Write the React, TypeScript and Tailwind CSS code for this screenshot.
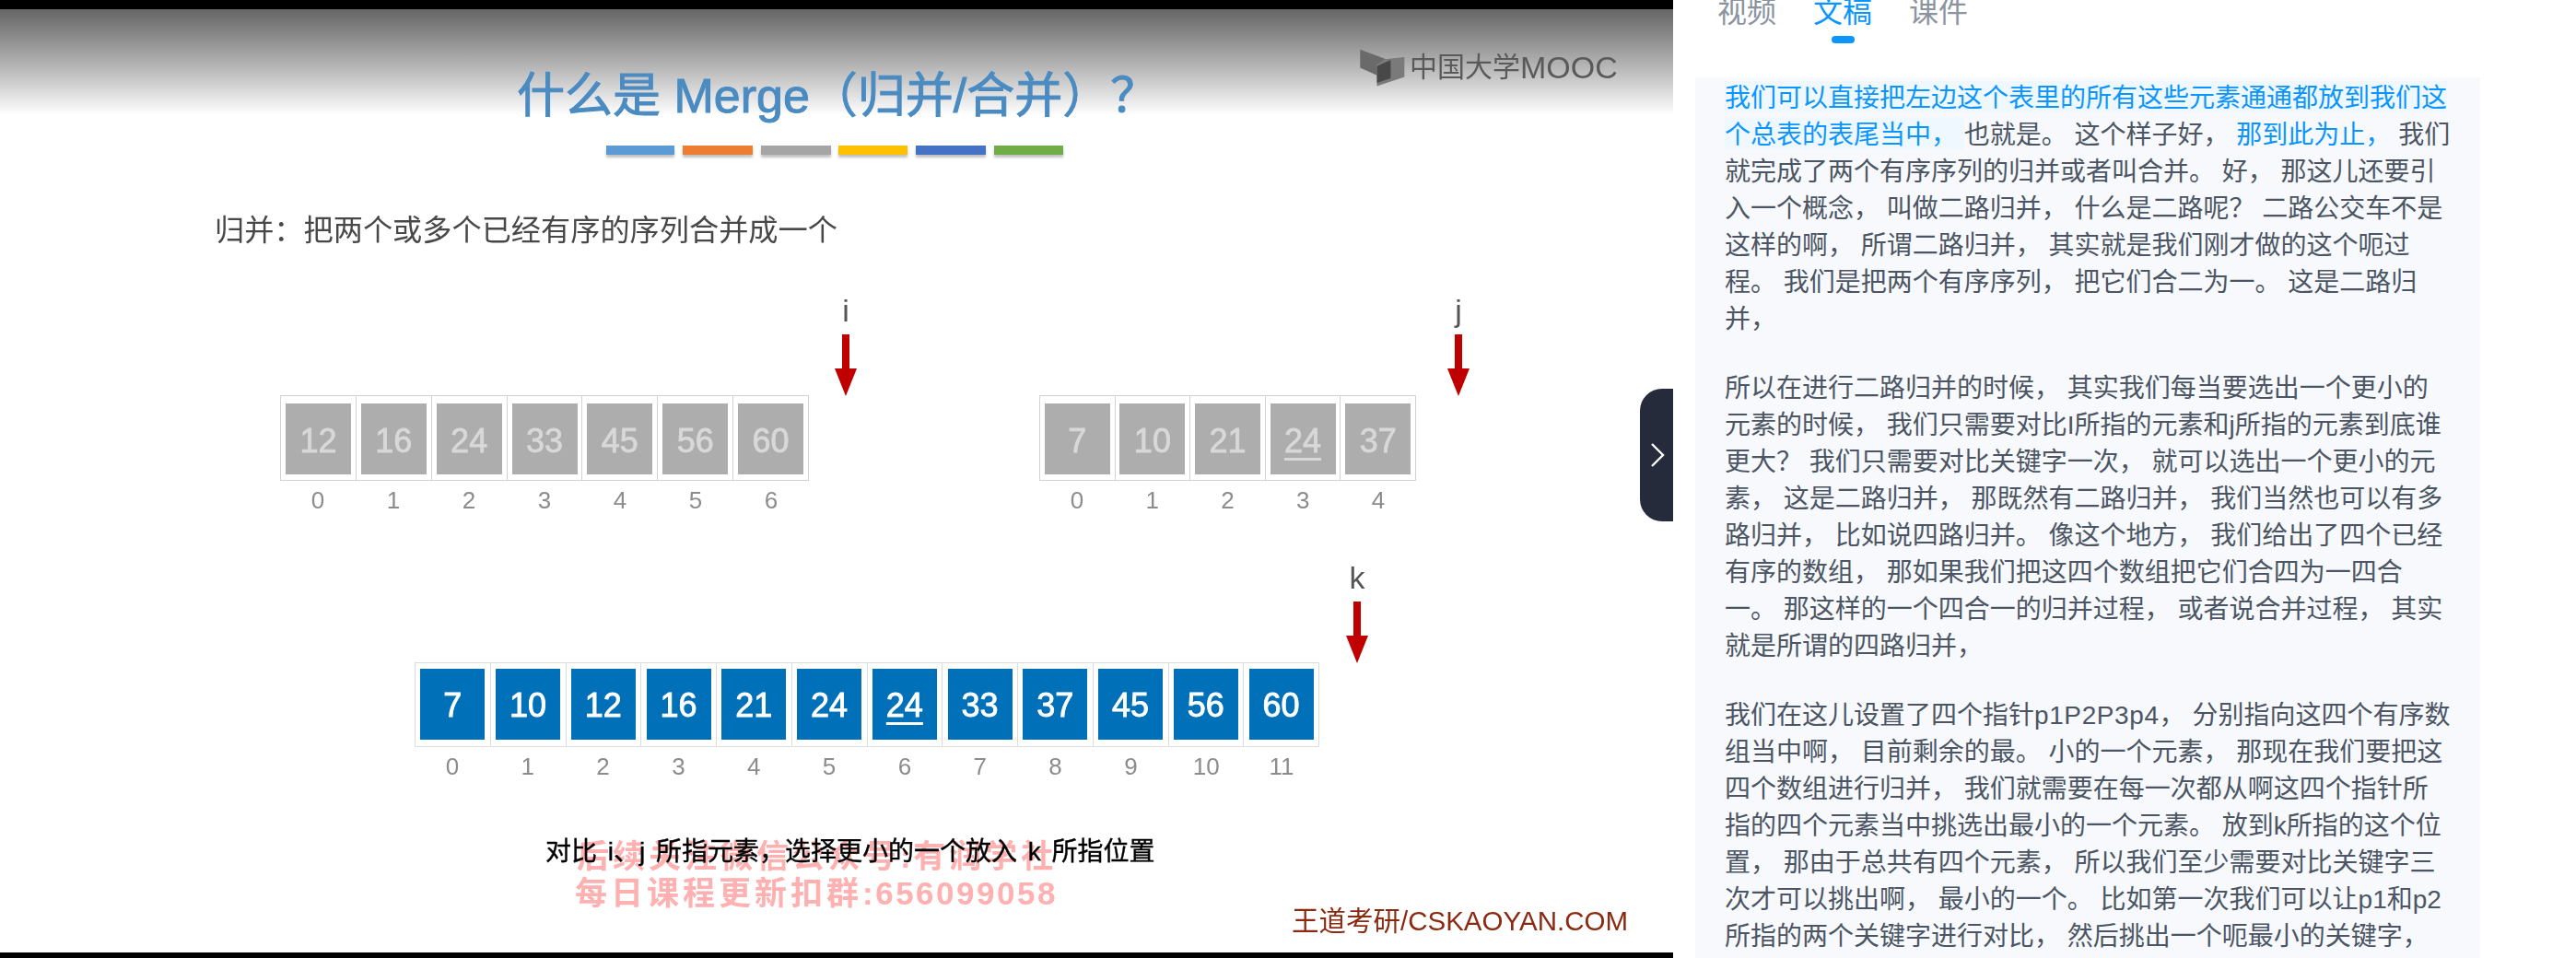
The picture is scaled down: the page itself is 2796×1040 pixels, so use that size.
const A1 = ["12", "16", "24", "33", "45", "56", "60"];
const A2 = ["7", "10", "21", "24", "37"];
const A3 = ["7", "10", "12", "16", "21", "24", "24", "33", "37", "45", "56", "60"];

function Arrow() {
  return (
    <svg width="24" height="67" viewBox="0 0 24 67" className="block">
      <polygon points="8,0 16,0 16,37 24,37 12,67 0,37 8,37" fill="#c00000" />
    </svg>
  );
}

function Pointer({ name, className }: { name: string; className: string }) {
  return (
    <div className={"absolute flex w-[40px] flex-col items-center " + className}>
      <div className="h-[46px] text-[34px] leading-[40px] text-[#555]">{name}</div>
      <Arrow />
    </div>
  );
}

function GreyArray({ items, under, className }: { items: string[]; under: number; className: string }) {
  return (
    <div className={"absolute " + className}>
      <div className="flex h-[93px] border border-[#d2d2d2]">
        {items.map((n, i) => (
          <div key={i} className="flex flex-1 justify-center border-r border-[#d2d2d2] pt-[8px] pb-[6px] last:border-r-0">
            <div className="flex w-[71px] items-center justify-center bg-[#adadad] pt-[5px] text-[36px] text-[#d8d8d8] [-webkit-text-stroke:0.8px_#d8d8d8]">
              <span className={i === under ? "underline decoration-[3px] underline-offset-[6px]" : ""}>{n}</span>
            </div>
          </div>
        ))}
      </div>
      <div className="flex pt-[6px]">
        {items.map((_, i) => (
          <div key={i} className="flex-1 text-center text-[26px] leading-[30px] text-[#8c8c8c]">{i}</div>
        ))}
      </div>
    </div>
  );
}

function BlueArray() {
  return (
    <div className="absolute top-[719px] left-[450px] w-[982px]">
      <div className="flex h-[92px] border border-[#dcdcdc]">
        {A3.map((n, i) => (
          <div key={i} className="flex flex-1 justify-center border-r border-[#dcdcdc] pt-[6px] pb-[7px] last:border-r-0">
            <div className="flex w-[70px] items-center justify-center bg-[#0070b8] pt-[3px] text-[36px] text-white [-webkit-text-stroke:0.9px_white]">
              <span className={i === 6 ? "underline decoration-[3px] underline-offset-[6px]" : ""}>{n}</span>
            </div>
          </div>
        ))}
      </div>
      <div className="flex pt-[6px]">
        {A3.map((_, i) => (
          <div key={i} className="flex-1 text-center text-[26px] leading-[30px] text-[#8c8c8c]">{i}</div>
        ))}
      </div>
    </div>
  );
}

function Video() {
  return (
    <div className="relative h-[1040px] w-[1816px] shrink-0 overflow-hidden bg-white">
      <div className="absolute inset-x-0 top-[10px] h-[115px] bg-gradient-to-b from-[#666666] to-white" />
      <div className="absolute inset-0 blur-[0.6px]">
        <div className="absolute top-[68px] left-[561px] text-[52px] leading-[72px] whitespace-nowrap text-[#4a8bc2] [-webkit-text-stroke:1px_#4a8bc2]">
          什么是 Merge（归并/合并）？
        </div>
        <div className="absolute top-[158px] left-[658px] flex gap-[8.8px]">
          <div className="h-[10px] w-[74px] bg-[#5b9bd5] shadow-[0_3px_3px_rgba(0,0,0,0.25)]" />
          <div className="h-[10px] w-[76px] bg-[#ed7d31] shadow-[0_3px_3px_rgba(0,0,0,0.25)]" />
          <div className="h-[10px] w-[76px] bg-[#a5a5a5] shadow-[0_3px_3px_rgba(0,0,0,0.25)]" />
          <div className="h-[10px] w-[75px] bg-[#ffc000] shadow-[0_3px_3px_rgba(0,0,0,0.25)]" />
          <div className="h-[10px] w-[76px] bg-[#4472c4] shadow-[0_3px_3px_rgba(0,0,0,0.25)]" />
          <div className="h-[10px] w-[75px] bg-[#70ad47] shadow-[0_3px_3px_rgba(0,0,0,0.25)]" />
        </div>
        <div className="absolute top-[227px] left-[233px] text-[32.2px] leading-[46px] whitespace-nowrap text-[#484848]">
          归并：把两个或多个已经有序的序列合并成一个
        </div>

        <svg width="53" height="47" viewBox="40 30 160 140" className="absolute top-[50px] left-[1473px]">
          <polygon points="50,40 135,72 105,90 105,125 50,100" fill="#6a6a6a" />
          <polygon points="130,72 195,65 195,130 105,160 105,90" fill="#7a7a7a" />
          <polygon points="150,75 150,135 105,150 105,95" fill="#484848" />
        </svg>
        <div className="absolute top-[52px] left-[1530px] flex items-center leading-[42px] whitespace-nowrap text-[#5a5a5a]">
          <span className="text-[30px]">中国大学</span>
          <span className="text-[34px]">MOOC</span>
        </div>

        <GreyArray items={A1} under={-1} className="top-[429px] left-[304px] w-[574px]" />
        <GreyArray items={A2} under={3} className="top-[429px] left-[1128px] w-[409px]" />
        <Pointer name="i" className="top-[317px] left-[898px]" />
        <Pointer name="j" className="top-[317px] left-[1563px]" />
        <BlueArray />
        <Pointer name="k" className="top-[607px] left-[1453px]" />

        <div className="absolute top-[907px] left-[626px] text-[35px] leading-[46px] font-bold tracking-[4px] whitespace-nowrap text-[#ffb0b0]">
          后续关注微信公众号<span className="tracking-[2.5px]">:</span>有润学社
        </div>
        <div className="absolute top-[947px] left-[624px] text-[35px] leading-[46px] font-bold tracking-[4px] whitespace-nowrap text-[#ffb0b0]">
          每日课程更新扣群<span className="tracking-[2.5px]">:656099058</span>
        </div>
        <div className="absolute top-[906px] left-[592px] text-[28px] leading-[38px] whitespace-nowrap text-black [word-spacing:4px] [-webkit-text-stroke:0.4px_black]">
          对比 i、j 所指元素，选择更小的一个放入 k 所指位置
        </div>
        <div className="absolute top-[980px] left-[1402px] text-[29.5px] leading-[40px] whitespace-nowrap text-[#8b2a10]">
          王道考研/CSKAOYAN.COM
        </div>
      </div>

      <div className="absolute inset-x-0 top-0 h-[10px] bg-black" />
      <div className="absolute inset-x-0 bottom-0 h-[6px] bg-black" />

      <div className="absolute top-[422px] left-[1780px] flex h-[144px] w-[36px] items-center justify-center rounded-l-[24px] bg-[#252b3a]">
        <svg width="16" height="26" viewBox="0 0 16 26" fill="none" stroke="white" strokeWidth="2.4" className="translate-x-[1px]">
          <path d="M2 1 L14 13 L2 25" />
        </svg>
      </div>
    </div>
  );
}

function Tabs() {
  return (
    <div className="-mt-[9px] flex items-start gap-10 pl-[48px] text-[32px] leading-[44px] text-[#8b93a1]">
      <div>视频</div>
      <div className="flex flex-col items-center text-[#0a95ff]">
        <div>文稿</div>
        <div className="mt-[4px] h-[8px] w-[25px] rounded-full bg-[#0a95ff]" />
      </div>
      <div>课件</div>
    </div>
  );
}

function Transcript() {
  return (
    <div className="mt-[37px] ml-[24px] w-[852px] grow bg-[#f7f9fd] px-8 pt-[3px] text-[28px] leading-[40px] text-[#4b5563]">
      <p className="mb-[35px]">
        <span className="bg-[#f0f8ff] pt-[3px] text-[#0a95ff]">我们可以直接把左边这个表里的所有这些元素通通都放到我们这个总表的表尾当中， </span>
        也就是。 这个样子好， <span className="text-[#0a95ff]">那到此为止， </span>
        我们就完成了两个有序序列的归并或者叫合并。 好， 那这儿还要引入一个概念， 叫做二路归并， 什么是二路呢？ 二路公交车不是这样的啊， 所谓二路归并， 其实就是我们刚才做的这个呃过程。 我们是把两个有序序列， 把它们合二为一。 这是二路归并，
      </p>
      <p className="mb-[35px]">
        所以在进行二路归并的时候， 其实我们每当要选出一个更小的元素的时候， 我们只需要对比I所指的元素和j所指的元素到底谁更大？ 我们只需要对比关键字一次， 就可以选出一个更小的元素， 这是二路归并， 那既然有二路归并， 我们当然也可以有多路归并， 比如说四路归并。 像这个地方， 我们给出了四个已经有序的数组， 那如果我们把这四个数组把它们合四为一四合一。 那这样的一个四合一的归并过程， 或者说合并过程， 其实就是所谓的四路归并，
      </p>
      <p>
        我们在这儿设置了四个指针<span className="tracking-[0.6px]">p1P2P3p4</span>， 分别指向这四个有序数组当中啊， 目前剩余的最。 小的一个元素， 那现在我们要把这四个数组进行归并， 我们就需要在每一次都从啊这四个指针所指的四个元素当中挑选出最小的一个元素。 放到k所指的这个位置， 那由于总共有四个元素， 所以我们至少需要对比关键字三次才可以挑出啊， 最小的一个。 比如第一次我们可以让p1和p2所指的两个关键字进行对比， 然后挑出一个呃最小的关键字，
      </p>
    </div>
  );
}

export default function App() {
  return (
    <div className="flex h-[1040px] w-[2796px] overflow-hidden bg-white font-['Liberation_Sans','Noto_Sans_CJK_SC',sans-serif]">
      <Video />
      <div className="flex min-w-0 flex-1 flex-col">
        <Tabs />
        <Transcript />
      </div>
    </div>
  );
}
